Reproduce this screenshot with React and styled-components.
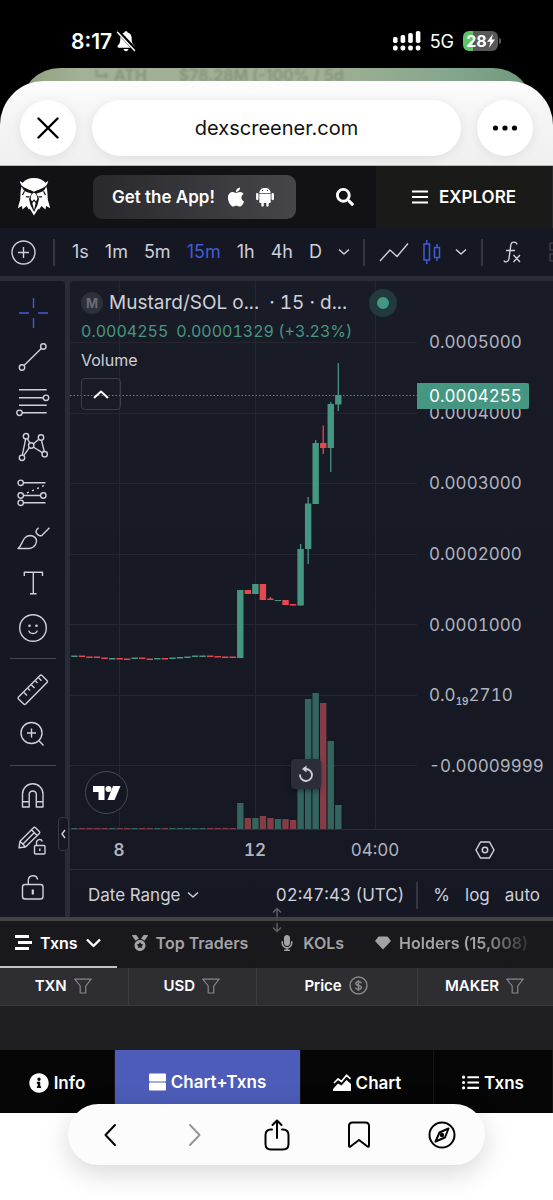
import React from "react";
import styled, { createGlobalStyle, css } from "styled-components";
import { FaApple, FaSearch, FaMedal, FaMicrophone, FaInfoCircle, FaListUl } from "react-icons/fa";
import { IoLogoAndroid } from "react-icons/io";

const color = {
  panel: "#151823",
  gap: "#2a2b38",
  line: "#2b2d39",
  text: "#ced0da",
  axis: "#b0b3be",
  green: "#459782",
  red: "#e5484f",
  volGreen: "#33645e",
  volRed: "#843d47",
  blue: "#3f5bd9",
};

const GlobalStyle = createGlobalStyle`
  *, *::before, *::after { box-sizing: border-box; }
  body {
    margin: 0;
    background: #fff;
    font-family: Inter, "Liberation Sans", sans-serif;
    color: ${color.text};
  }
  button, input {
    margin: 0;
    padding: 0;
    border: 0;
    background: none;
    font: inherit;
    color: inherit;
  }
  svg { display: block; flex: none; }
`;

const Page = styled.div`
  display: flex;
  flex-direction: column;
  background: #000;
  overflow: hidden;
`;

/* ---------- Phone status bar ---------- */

const StatusBar = styled.div`
  display: flex;
  align-items: center;
  justify-content: space-between;
  height: 68px;
  padding: 14px 55px 0 71px;
  color: #fff;
`;

const StatusGroup = styled.div`
  display: flex;
  align-items: center;
  gap: ${(p) => p.$gap}px;
`;

const Clock = styled.span`
  font-size: 21px;
  font-weight: 600;
`;

const Network = styled.span`
  font-size: 18px;
`;

const Battery = styled.span`
  position: relative;
  display: flex;
  align-items: center;
  justify-content: center;
  width: 35px;
  height: 20px;
  border-radius: 6px;
  background: linear-gradient(90deg, #5ec466 10px, #58585a 10px);
  font-size: 16px;
  font-weight: 700;

  &::after {
    content: "";
    position: absolute;
    right: -3px;
    width: 2px;
    height: 6px;
    border-radius: 0 2px 2px 0;
    background: #58585a;
  }
`;

/* ---------- Browser sheet ---------- */

const BackSheet = styled.div`
  display: flex;
  height: 40px;
  margin: 0 20px -27px;
  padding: 0 74px;
  gap: 32px;
  border-radius: 44px 44px 0 0;
  background: linear-gradient(90deg, #8f9f7c, #a3b196 12%, #9fb094 60%, #84a58d 85%, #6d9879);
  color: #84947c;
  font-size: 16px;
  font-weight: 600;
  line-height: 14px;
  white-space: pre;
  overflow: hidden;

  span { filter: blur(1px); }
`;

const BrowserBar = styled.header`
  position: relative;
  display: flex;
  align-items: center;
  gap: 16px;
  height: 85px;
  padding: 10px 20px 0;
  border-radius: 44px 44px 0 0;
  border-bottom: 1px solid #b8bab9;
  background: linear-gradient(#fdfdfd, #f5f5f6 40%, #f0f0f1);
`;

const RoundButton = styled.button`
  display: flex;
  align-items: center;
  justify-content: center;
  width: 56px;
  height: 56px;
  border-radius: 50%;
  background: #fff;
  box-shadow: 0 2px 12px rgba(0, 0, 0, 0.08);
  color: #000;
`;

const Address = styled.input`
  flex: 1;
  min-width: 0;
  height: 56px;
  border-radius: 28px;
  background: #fff;
  box-shadow: 0 2px 12px rgba(0, 0, 0, 0.08);
  color: #111;
  font-size: 20px;
  text-align: center;
`;

/* ---------- Site header ---------- */

const SiteHeader = styled.header`
  display: flex;
  align-items: stretch;
  height: 62px;
  background: #111116;
  color: #fff;
`;

const HeaderMain = styled.div`
  flex: 1;
  display: flex;
  align-items: center;
  padding: 0 22px 0 17px;
`;

const GetApp = styled.button`
  display: flex;
  align-items: center;
  gap: 5px;
  height: 44px;
  margin: 0 auto 0 42px;
  padding: 0 18px 0 19px;
  border-radius: 9px;
  background: linear-gradient(90deg, #28282d, #45454a);
  font-size: 17px;
  font-weight: 600;

  svg:first-of-type { margin-left: 5px; }
`;

const IconButton = styled.button`
  display: flex;
  align-items: center;
  justify-content: center;
  color: ${(p) => (p.$active ? color.blue : "inherit")};
`;

const Explore = styled.button`
  display: flex;
  align-items: center;
  justify-content: center;
  gap: 11px;
  width: 32%;
  background: #1a1a19;
  border-right: 1px solid #2a2a2c;
  font-size: 17px;
  font-weight: 600;
`;

/* ---------- Chart toolbar ---------- */

const Toolbar = styled.div`
  display: flex;
  align-items: center;
  justify-content: space-between;
  height: 53px;
  padding-left: 11px;
  background: ${color.panel};
  border-bottom: 5px solid ${color.gap};
  overflow: hidden;
`;

const ToolbarGroup = styled.div`
  display: flex;
  align-items: center;
  gap: ${(p) => p.$gap}px;
`;

const Interval = styled.button`
  font-size: 18px;
  line-height: 24px;
  color: ${(p) => (p.$active ? color.blue : color.text)};
`;

const Divider = styled.span`
  width: 2px;
  height: 27px;
  background: #343743;
`;

/* ---------- Chart body ---------- */

const ChartArea = styled.div`
  position: relative;
  display: flex;
  align-items: stretch;
  gap: 5px;
  background: ${color.gap};
  border-bottom: 4px solid #424247;
`;

const Tools = styled.div`
  position: relative;
  display: flex;
  flex-direction: column;
  align-items: center;
  width: 65px;
  padding: 9px 0 8px;
  border-top-right-radius: 4px;
  background: ${color.panel};
`;

const Tool = styled.button`
  display: flex;
  align-items: center;
  justify-content: center;
  height: 45px;
  color: ${(p) => (p.$active ? color.blue : color.text)};
`;

const ToolRule = styled.hr`
  width: 46px;
  height: 1px;
  margin: 8px 0;
  border: 0;
  background: #454854;
`;

const Collapse = styled.button`
  position: absolute;
  right: -4px;
  bottom: 66px;
  display: flex;
  align-items: center;
  justify-content: center;
  width: 11px;
  height: 34px;
  border: 1px solid #353846;
  border-radius: 4px;
  background: ${color.panel};
`;

const ChartPanel = styled.div`
  flex: 1;
  min-width: 0;
  display: flex;
  flex-direction: column;
  border-top-left-radius: 4px;
  background: linear-gradient(#191b26, ${color.panel});
  font-variant-numeric: tabular-nums;
`;

const PlotRow = styled.div`
  display: flex;
  height: 549px;
  border-bottom: 1px solid ${color.line};
`;

const Plot = styled.div`
  position: relative;
  flex: 1;
  min-width: 0;
`;

const PlotSvg = styled.svg`
  width: 100%;
  height: 100%;
`;

const Legend = styled.div`
  position: absolute;
  top: 8px;
  left: 11px;
  display: flex;
  flex-direction: column;
  align-items: flex-start;
`;

const Symbol = styled.div`
  display: flex;
  align-items: center;
  height: 27px;
  gap: 6px;
  font-size: 19px;
  white-space: pre;
`;

const TokenBadge = styled.span`
  display: flex;
  align-items: center;
  justify-content: center;
  width: 22px;
  height: 22px;
  border-radius: 50%;
  background: #2d2f3a;
  color: #686b76;
  font-size: 13px;
  font-weight: 700;
`;

const LiveDot = styled.span`
  width: 28px;
  height: 28px;
  margin-left: 16px;
  border: 8px solid #203a3d;
  border-radius: 50%;
  background: ${color.green};
`;

const Quote = styled.div`
  display: flex;
  gap: 8px;
  height: 30px;
  color: ${color.green};
  font-size: 16px;
  line-height: 30px;
  white-space: nowrap;
`;

const Study = styled.div`
  height: 28px;
  font-size: 16px;
  line-height: 28px;
`;

const LegendToggle = styled.button`
  display: flex;
  align-items: center;
  justify-content: center;
  width: 40px;
  height: 32px;
  margin-top: 4px;
  border: 1px solid #3a3d49;
  border-radius: 4px;
  color: #fff;
`;

const BrandMark = styled.a`
  position: absolute;
  left: 15px;
  bottom: 15px;
  display: flex;
  align-items: center;
  justify-content: center;
  width: 43px;
  height: 43px;
  border: 1px solid #484b55;
  border-radius: 50%;
  background: ${color.panel};
  color: #fff;
`;

const ResetView = styled.button`
  position: absolute;
  right: 96px;
  bottom: 40px;
  display: flex;
  align-items: center;
  justify-content: center;
  width: 30px;
  height: 30px;
  border-radius: 4px;
  background: #2b2d39;
  box-shadow: 0 2px 5px rgba(0, 0, 0, 0.4);
`;

const PriceAxis = styled.div`
  position: relative;
  display: flex;
  flex-direction: column;
  justify-content: space-between;
  width: 136px;
  padding: 51px 0 53px 12px;
  color: ${color.axis};
  font-size: 17px;
  line-height: 20px;

  sub {
    font-size: 10px;
    font-weight: 600;
    line-height: 0;
  }
`;

const LastPrice = styled.div`
  position: absolute;
  top: 102px;
  left: 0;
  width: 112px;
  padding-left: 12px;
  border-radius: 0 2px 2px 0;
  background: ${color.green};
  color: #fff;
  line-height: 26px;
`;

const TimeRow = styled.div`
  display: flex;
  align-items: center;
  height: 40px;
  border-bottom: 1px solid ${color.line};
`;

const TimeAxis = styled.div`
  flex: 1;
  display: grid;
  grid-template-columns: 98fr 174fr 66fr 9fr;
  text-align: center;
  color: ${color.axis};
  font-size: 17px;

  b { font-weight: 600; }
`;

const AxisCorner = styled.div`
  display: flex;
  justify-content: center;
  width: 136px;
`;

const RangeRow = styled.div`
  display: flex;
  align-items: center;
  height: 47px;
  padding: 3px 13px 0 18px;
  font-size: 17px;
`;

const RangeButton = styled.button`
  display: flex;
  align-items: center;
  gap: 7px;
  margin-right: auto;
`;

const ScaleOptions = styled.div`
  display: flex;
  align-items: center;
  gap: 15px;
  margin-left: 12px;
`;

const ResizeHandle = styled.div`
  position: absolute;
  left: 50%;
  bottom: -16px;
  margin-left: -6px;
  color: #62636b;
`;

/* ---------- Transactions ---------- */

const Tabs = styled.nav`
  display: flex;
  height: 47px;
  background: linear-gradient(#1a191e, #17171c);
  overflow: hidden;
`;

const Tab = styled.button`
  display: flex;
  align-items: center;
  gap: 8px;
  padding: 0 16px 4px 15px;
  color: #a3a3a6;
  font-size: 16px;
  font-weight: 600;
  white-space: nowrap;
  ${(p) =>
    p.$active &&
    css`
      color: #fff;
      box-shadow: inset 0 -2px #c0c0c3;
    `}
  ${(p) =>
    p.$fade &&
    css`
      mask-image: linear-gradient(90deg, #000 65%, transparent 97%);
    `}
`;

const TxnTable = styled.table`
  width: 100%;
  table-layout: fixed;
  border-collapse: collapse;
  background: #1f1e23;
  color: #fff;
`;

const HeadCell = styled.th`
  width: ${(p) => p.$width};
  height: 37px;
  padding: 0 2px 1px 0;
  background: #2e2d32;
  border-right: 1px solid #3b3b40;
  border-bottom: 1px solid #3b3b40;
  font-size: 15px;
  font-weight: 600;

  &:last-child { border-right: 0; }
`;

const HeadLabel = styled.span`
  display: flex;
  align-items: center;
  justify-content: center;
  gap: 7px;

  svg { color: #88888b; }
`;

const EmptyCell = styled.td`
  height: 45px;
  padding: 0;
`;

const ViewNav = styled.nav`
  display: grid;
  grid-template-columns: 115fr 186fr 133fr 119fr;
  height: 63px;
  background: #050505;
`;

const View = styled.button`
  display: flex;
  align-items: center;
  justify-content: center;
  gap: 5px;
  padding-top: ${(p) => (p.$active ? 0 : 2)}px;
  background: ${(p) => (p.$active ? "#4c5cb8" : "none")};
  border-right: 1px solid #151515;
  color: #fff;
  font-size: 17px;
  font-weight: 600;
  white-space: nowrap;
`;

/* ---------- Browser controls ---------- */

const BrowserFooter = styled.footer`
  padding: 0 68px 35px;
  background: #fff;
`;

const Controls = styled.nav`
  position: relative;
  display: flex;
  align-items: center;
  justify-content: space-between;
  height: 61px;
  margin-top: -9px;
  padding: 0 28px;
  border-radius: 31px;
  background: #fcfcfc;
  box-shadow: 0 8px 28px rgba(0, 0, 0, 0.16);
  color: #000;
`;

/* ---------- Icons ---------- */

const Draw = ({ w = 36, h = w, sw = 1.4, children, ...rest }) => (
  <svg
    width={w}
    height={h}
    viewBox={`0 0 ${w} ${h}`}
    fill="none"
    stroke="currentColor"
    strokeWidth={sw}
    strokeLinejoin="round"
    aria-hidden="true"
    {...rest}
  >
    {children}
  </svg>
);

const ChevronDown = ({ w = 12, h = 8, sw = 1.5 }) => (
  <Draw w={w} h={h} sw={sw}>
    <path d={`M1 1.5 L${w / 2} ${h - 2} L${w - 1} 1.5`} />
  </Draw>
);

const BellOff = () => (
  <Draw w={20} h={22} sw={0}>
    <path
      fill="currentColor"
      d="M10 1.2c.9 0 1.5.5 1.6 1.3 2.7.7 4.1 2.8 4.1 5.8 0 4.5.8 5.5 2.3 7 .9.9.6 2.4-.8 2.4H2.8c-1.4 0-1.7-1.5-.8-2.4 1.500-1.500 2.300-2.500 2.300-7 0-3 1.400-5.100 4.100-5.800.1-.8.7-1.300 1.600-1.300zM7.500 19h5c-.2 1.400-1.200 2.200-2.500 2.200S7.700 20.400 7.500 19z"
    />
    <path d="M2.5 2 L18.8 19.5" stroke="#000" strokeWidth="4" />
    <path d="M1.5 2.2 L18.5 20.5" stroke="currentColor" strokeWidth="1.5" strokeLinecap="round" />
  </Draw>
);

const Signal = () => (
  <Draw w={28} h={20} sw={0} fill="currentColor">
    {[0, 1, 2, 3].map((i) => (
      <g key={i}>
        <rect x={i * 7.6} y={6 - i * 2} width="4.6" height={6 + i * 2} rx="1.8" />
        <rect x={i * 7.6} y="14.5" width="4.6" height="5" rx="1.8" />
      </g>
    ))}
  </Draw>
);

const Bolt = () => (
  <Draw w={8} h={14} sw={0}>
    <path fill="currentColor" d="M6 0 L0 7.8 H3.5 L2 14 L8 5.6 H4.6 Z" />
  </Draw>
);

const Owl = () => (
  <Draw w={34} h={40} sw={0}>
    <path
      fill="#fff"
      d="M17 1c5 0 9 1.8 11.3 4.7l2.9-1.8c-.4 2.1-1.2 3.7-2.2 5 .9 1.7 1.3 4 1.4 6.5l.4 7.2 2.4 8.6-4.1-2.1-.7 3.5-3.9-3.5-2.600 3.600-.5-1.100L17 38.500l-4.400-6.900-.5 1.100-2.600-3.600-3.900 3.500-.7-3.500-4.100 2.100 2.400-8.600.4-7.200c.1-2.500.5-4.800 1.400-6.500-1-1.300-1.800-2.900-2.200-5l2.900 1.800C8 2.800 12 1 17 1z"
    />
    <path
      fill="#111116"
      d="M4.6 8.2c3.3 3.7 8.2 4.1 12.4 6.6 4.2-2.5 9.1-2.9 12.4-6.6-.6 4.3-3.4 6.7-7.4 7.5l-2.5.7L22 22l-1.5 6-3.5 7-3.5-7-1.5-6 2.5-5.6-2.5-.7c-4-.8-6.8-3.2-7.4-7.5z"
    />
    <path fill="#fff" d="M17 15.8c2.2.4 3.3 3 3.3 6.3L19 24.5l-2-2.3-2 2.3-1.3-2.4c0-3.3 1.100-5.900 3.300-6.300zM15.300 26l1.700-1.900 1.700 1.900-1.700 7z" />
    <path fill="#fff" d="M7.2 15.7l5.3 1.5c-.4 1.8-4.3 1.8-5.3-1.5zM26.8 15.7l-5.3 1.5c.4 1.8 4.3 1.8 5.3-1.5z" />
    <path d="M7.5 14.2l-2 3.8M26.5 14.2l2 3.8M9 19.5c1.5.8 2.5.5 3.5 0M25 19.5c-1.5.8-2.5.5-3.5 0" stroke="#111116" strokeWidth="1.2" />
  </Draw>
);

const Menu = () => (
  <Draw w={16} h={14} sw={2.2}>
    <path d="M0 1.5H16M0 7H16M0 12.5H16" />
  </Draw>
);

const PlusCircle = () => (
  <Draw w={25}>
    <circle cx="12.5" cy="12.5" r="11.5" />
    <path d="M12.5 7V18M7 12.5H18" />
  </Draw>
);

const LineStyle = () => (
  <Draw w={30} h={20}>
    <path d="M1 19 L11 8 L18 14.5 L29 1.5" />
  </Draw>
);

const Candles = () => (
  <Draw w={18} h={26} sw={1.5}>
    <path d="M1 5H6.5V21H1ZM3.7 1V5M3.7 21V25M11.5 8.5H16.5V18.5H11.5ZM14 5V8.5M14 18.5V22" />
  </Draw>
);

const Fx = () => (
  <Draw w={18} h={22}>
    <path d="M14 3.5C13.5 .5 8.5 0 7.8 4L6 17.5C5.5 21.5 1.5 21.7 1 19.5M3 9.500H12M10.500 14L17 21M17 14L10.500 21" />
  </Draw>
);

const GridFade = () => (
  <Draw w={12} h={20} sw={1.2} opacity="0.25">
    <path d="M12 1H9V8H12M12 12H9V19H12" />
  </Draw>
);

const toolIcons = {
  Crosshair: <path d="M4 18H14M23 18H33M18.5 3V13M18.5 23V33" />,
  "Trend line": (
    <>
      <circle cx="7" cy="27.5" r="2.7" />
      <circle cx="28.3" cy="6.5" r="2.7" />
      <path d="M9 25.5L26.3 8.5" />
    </>
  ),
  "Fib retracement": (
    <>
      <path d="M4 4.8H31.7M4 12.8H28.3M4 20.2H31.7M7 27.8H31.7" />
      <circle cx="31" cy="12.8" r="2.7" />
      <circle cx="4.5" cy="27.8" r="2.7" />
    </>
  ),
  Patterns: (
    <>
      <path d="M7.3 25.2L10.7 8.8M12.4 8.5L14.9 13.2M18.3 14L23.8 9.3M26.4 10.2L29.3 21.5M18.2 17L27.4 22.7M14.4 17.7L8.7 25.6" />
      <circle cx="7" cy="27.8" r="2.7" />
      <circle cx="11" cy="6.2" r="2.7" />
      <circle cx="16.2" cy="15.5" r="2.7" />
      <circle cx="26" cy="7.5" r="2.7" />
      <circle cx="29.7" cy="24.2" r="2.7" />
    </>
  ),
  Projection: (
    <>
      <path d="M8.5 7.8H30.5M8.5 20.5H25.6M8.5 27.8H30.5" />
      <path d="M12 18L29 10.5" strokeDasharray="2 3.5" />
      <circle cx="5.7" cy="7.8" r="2.7" />
      <circle cx="5.7" cy="20.5" r="2.7" />
      <circle cx="28.3" cy="20.5" r="2.7" />
      <circle cx="5.7" cy="27.8" r="2.7" />
    </>
  ),
  Brush: (
    <>
      <path d="M3 28.5C8 25 7 16 15 15.5C19 15.5 22 18.5 21.5 21.5C21 26 17 28.5 13.5 28.5Z" />
      <path d="M34.5 7.8L27 15.3C24.5 17 20 13.5 21.3 10.5C21.8 9 22.6 8.5 23.7 7.8" />
    </>
  ),
  Text: <path d="M9.3 11V7.2H27.5V11M18.3 7.2V28.8M15 28.8H21.6" />,
  Emoji: (
    <>
      <circle cx="18" cy="18" r="13.3" />
      <circle cx="14.5" cy="15.8" r="1.3" fill="currentColor" stroke="none" />
      <circle cx="21.5" cy="15.8" r="1.3" fill="currentColor" stroke="none" />
      <path d="M13.8 20.5C14.5 24.5 21.5 24.5 22.2 20.5" />
    </>
  ),
  Measure: (
    <>
      <path d="M3.5 25L25 3.5Q26 2.5 27 3.5L32 8.5Q33 9.5 32 10.5L10.7 32Q9.7 33 8.7 32L3.5 27Q2.5 26 3.5 25Z" />
      <path d="M9 20.5L12 23.5M13 16.5L15 18.5M16.5 13L19.5 16M20.5 9L22.5 11M23.5 5.8L26.5 8.8" />
    </>
  ),
  Zoom: (
    <>
      <circle cx="16.5" cy="16" r="10.5" />
      <path d="M16.5 11.5V20.5M12 16H21M24 23.8L28.5 28.5" />
    </>
  ),
  Magnet: (
    <path d="M7.5 28V15A10.2 10.2 0 0 1 28 15V28H21.3V15A3.6 3.6 0 0 0 14.2 15V28ZM7.5 22.8H14.2M21.3 22.8H28" />
  ),
  "Keep drawing": (
    <>
      <path d="M4 23.8L5 17.2L18.5 3.8Q19.5 2.8 20.5 3.8L24.3 7.5Q25.3 8.5 24.3 9.5L10.5 23ZM5 17.2L10.5 23M16.5 5.8L22 11.5M8 20L19.2 8.7" />
      <rect x="19.5" y="21.5" width="10.5" height="8.5" rx="1" />
      <path d="M21.5 21.5V18.5A3 3 0 0 1 27.3 17.5M24.8 24.5V27" />
    </>
  ),
  Lock: (
    <>
      <rect x="7.5" y="15.5" width="20.5" height="14.5" rx="2.5" />
      <path d="M13.3 15.5V11A4.7 4.7 0 0 1 22.6 10.5" />
      <path d="M17.8 20.5V25.5" strokeWidth="2.2" />
    </>
  ),
};

const toolGroups = [
  ["Crosshair", "Trend line", "Fib retracement", "Patterns", "Projection", "Brush", "Text", "Emoji"],
  ["Measure", "Zoom"],
  ["Magnet", "Keep drawing", "Lock"],
];

const TradingMark = () => (
  <Draw w={28} h={16} sw={0} fill="currentColor">
    <path d="M0 1H11.5V15H5.5V7H0Z" />
    <circle cx="15.5" cy="4" r="3" />
    <path d="M20 1H27.5L21.5 15H14.5Z" />
  </Draw>
);

const Reset = () => (
  <Draw w={16} h={18} sw={1.8}>
    <path d="M2 9.5A6 6 0 1 0 8 4H6" />
    <path d="M8.5 .5L4 4L8.5 7.5Z" fill="currentColor" stroke="none" />
  </Draw>
);

const Hexagon = () => (
  <Draw w={20} h={18} sw={1.5}>
    <path d="M5.5 1H14.5L19 9L14.5 17H5.5L1 9Z" />
    <circle cx="10" cy="9" r="2.7" />
  </Draw>
);

const ResizeArrows = () => (
  <Draw w={12} h={26} sw={1.4}>
    <path d="M6 10V1.5M2 5.5L6 1.5L10 5.5M6 16V24.5M2 20.5L6 24.5L10 20.5" />
  </Draw>
);

const TxnLines = () => (
  <Draw w={17} h={15} sw={3}>
    <path d="M0 1.5H14M3 7.5H17M0 13.5H14" />
  </Draw>
);

const Gem = () => (
  <Draw w={16} h={14} sw={0}>
    <path fill="currentColor" d="M3.5 .5H12.5L16 5L8 13.5L0 5Z" />
  </Draw>
);

const Funnel = () => (
  <Draw w={18} h={16} sw={1.2}>
    <path d="M.8 1.2H17.2L11.8 8V15H6.2V8Z" />
  </Draw>
);

const DollarCircle = () => (
  <Draw w={19} sw={1.5}>
    <circle cx="9.5" cy="9.5" r="8.5" />
    <path d="M12.5 7.2C12 5.5 7 5.2 6.8 7.5C6.7 10 12.5 8.8 12.4 11.5C12.3 14 7 13.6 6.5 11.6M9.5 4V15" />
  </Draw>
);

const SplitRows = () => (
  <Draw w={17} h={18} sw={0} fill="currentColor">
    <rect y="0.5" width="17" height="8" rx="1" />
    <rect y="9.5" width="17" height="8" rx="1" />
  </Draw>
);

const AreaChart = () => (
  <Draw w={18} h={17} sw={0}>
    <path fill="currentColor" d="M0 17V15L5 9.5L8.5 11.5L13.5 6L18 10V17Z" />
    <path d="M1 9L5 5L8.5 7.5L13.5 1.2L17.5 5" stroke="currentColor" strokeWidth="1.7" />
  </Draw>
);

/* ---------- Data ---------- */

const GRID_Y = [61.5, 132.5, 202.5, 273.5, 343.5, 414.5, 484.5];
const GRID_X = [49.5, 185.5, 305.5];
const STEP = 7.54;

/* Flat stretch: direction and price level */
const quiet = [
  ["g", 375], ["r", 375], ["r", 376], ["r", 376], ["r", 377], ["g", 377.5], ["r", 377.5], ["r", 378],
  ["g", 377], ["r", 377], ["r", 378], ["g", 377.5], ["r", 377.5], ["g", 377], ["g", 376.5], ["g", 376],
  ["g", 375], ["g", 375], ["r", 375], ["r", 375.5], ["r", 376], ["r", 376],
].map(([dir, y]) => [dir, y - 0.5, y + 1, y, y, 2]);

/* Direction, body top, body bottom, wick top, wick bottom, volume height */
const rally = [
  ["g", 309, 377, 309, 377, 27],
  ["r", 309, 313, 309, 313, 12],
  ["g", 303, 313, 303, 313, 12],
  ["r", 303, 319, 303, 319, 14],
  ["r", 317.5, 319, 316, 319, 12],
  ["g", 319, 320, 319, 320, 11],
  ["r", 319, 324, 319, 324, 11],
  ["r", 323, 324.5, 323, 324.5, 10],
  ["g", 268, 324.5, 263, 324.5, 54],
  ["g", 222.5, 268, 216, 283, 131],
  ["g", 162, 223, 159, 223, 137],
  ["r", 162, 167, 144.5, 173, 127],
  ["g", 123, 167, 121, 191, 89],
  ["g", 114, 123.5, 82, 130, 25],
];

const candles = [...quiet, ...rally];

const prices = [
  "0.0005000",
  "0.0004000",
  "0.0003000",
  "0.0002000",
  "0.0001000",
  <>0.0<sub>19</sub>2710</>,
  "-0.00009999",
];

const PriceChart = () => (
  <PlotSvg viewBox="0 0 347 549" preserveAspectRatio="xMaxYMin slice" role="img" aria-label="Price and volume chart">
    <g stroke="#242732" strokeWidth="1">
      {GRID_Y.map((y) => (
        <path key={y} d={`M0 ${y}H347`} />
      ))}
      {GRID_X.map((x) => (
        <path key={x} d={`M${x} 0V549`} />
      ))}
    </g>
    {candles.map(([dir, top, bottom, high, low, volume], i) => {
      const x = 4.4 + i * STEP;
      const up = dir === "g";
      return (
        <g key={i}>
          <rect x={x - 3.2} y={549 - volume} width="6.4" height={volume} fill={up ? color.volGreen : color.volRed} />
          <rect x={x - 3.2} y={top} width="6.4" height={bottom - top} fill={up ? color.green : color.red} />
          <path d={`M${x} ${high}V${low}`} stroke={up ? color.green : color.red} strokeWidth="1.3" />
        </g>
      );
    })}
    <path d="M0 114.5H347" stroke={color.green} strokeWidth="1" strokeDasharray="1.5 2" />
  </PlotSvg>
);

const intervals = ["1s", "1m", "5m", "15m", "1h", "4h", "D"];

export default function App() {
  return (
    <Page>
      <GlobalStyle />

      <StatusBar>
        <StatusGroup $gap={4}>
          <Clock>8:17</Clock>
          <BellOff />
        </StatusGroup>
        <StatusGroup $gap={9}>
          <Signal />
          <Network>5G</Network>
          <Battery>
            28
            <Bolt />
          </Battery>
        </StatusGroup>
      </StatusBar>

      <BackSheet>
        <span>↳ ATH</span>
        <span>$78.28M (-100% / 5d</span>
      </BackSheet>

      <BrowserBar>
        <RoundButton aria-label="Close">
          <Draw w={22} sw={2.4} strokeLinecap="round">
            <path d="M1.5 1.5L20.5 20.5M20.5 1.5L1.5 20.5" />
          </Draw>
        </RoundButton>
        <Address aria-label="Address" defaultValue="dexscreener.com" />
        <RoundButton aria-label="More">
          <Draw w={26} h={6} sw={0} fill="currentColor">
            <circle cx="3.5" cy="3" r="2.6" />
            <circle cx="13" cy="3" r="2.6" />
            <circle cx="22.5" cy="3" r="2.6" />
          </Draw>
        </RoundButton>
      </BrowserBar>

      <SiteHeader>
        <HeaderMain>
          <Owl />
          <GetApp>
            Get the App!
            <FaApple size={22} />
            <IoLogoAndroid size={26} />
          </GetApp>
          <IconButton aria-label="Search">
            <FaSearch size={18} />
          </IconButton>
        </HeaderMain>
        <Explore>
          <Menu />
          EXPLORE
        </Explore>
      </SiteHeader>

      <Toolbar>
        <ToolbarGroup $gap={17}>
          <IconButton aria-label="Add symbol">
            <PlusCircle />
          </IconButton>
          <Divider />
          <ToolbarGroup $gap={16}>
            {intervals.map((name) => (
              <Interval key={name} $active={name === "15m"}>
                {name}
              </Interval>
            ))}
            <IconButton aria-label="More intervals">
              <ChevronDown />
            </IconButton>
          </ToolbarGroup>
        </ToolbarGroup>
        <ToolbarGroup $gap={14}>
          <Divider />
          <IconButton aria-label="Line style">
            <LineStyle />
          </IconButton>
          <IconButton $active aria-label="Candles">
            <Candles />
          </IconButton>
          <IconButton aria-label="More chart types">
            <ChevronDown />
          </IconButton>
        </ToolbarGroup>
        <ToolbarGroup $gap={20}>
          <Divider />
          <IconButton aria-label="Indicators">
            <Fx />
          </IconButton>
          <GridFade />
        </ToolbarGroup>
      </Toolbar>

      <ChartArea>
        <Tools>
          {toolGroups.map((group, i) => (
            <React.Fragment key={i}>
              {i > 0 && <ToolRule />}
              {group.map((name) => (
                <Tool key={name} aria-label={name} $active={name === "Crosshair"}>
                  <Draw>{toolIcons[name]}</Draw>
                </Tool>
              ))}
            </React.Fragment>
          ))}
          <Collapse aria-label="Hide drawing toolbar">
            <Draw w={5} h={10}>
              <path d="M4 1L1 5L4 9" />
            </Draw>
          </Collapse>
        </Tools>

        <ChartPanel>
          <PlotRow>
            <Plot>
              <PriceChart />
              <Legend>
                <Symbol>
                  <TokenBadge>M</TokenBadge>
                  {"Mustard/SOL o...  · 15 · d..."}
                  <LiveDot />
                </Symbol>
                <Quote>
                  <span>0.0004255</span>
                  <span>0.00001329 (+3.23%)</span>
                </Quote>
                <Study>Volume</Study>
                <LegendToggle aria-label="Collapse legend">
                  <Draw w={16} h={9} sw={2}>
                    <path d="M1 8L8 1.5L15 8" />
                  </Draw>
                </LegendToggle>
              </Legend>
              <BrandMark href="#tradingview" aria-label="TradingView">
                <TradingMark />
              </BrandMark>
              <ResetView aria-label="Reset chart view">
                <Reset />
              </ResetView>
            </Plot>
            <PriceAxis>
              {prices.map((price, i) => (
                <span key={i}>{price}</span>
              ))}
              <LastPrice>0.0004255</LastPrice>
            </PriceAxis>
          </PlotRow>
          <TimeRow>
            <TimeAxis>
              <b>8</b>
              <b>12</b>
              <span>04:00</span>
            </TimeAxis>
            <AxisCorner>
              <IconButton aria-label="Chart settings">
                <Hexagon />
              </IconButton>
            </AxisCorner>
          </TimeRow>
          <RangeRow>
            <RangeButton>
              Date Range
              <ChevronDown />
            </RangeButton>
            <span>02:47:43 (UTC)</span>
            <ScaleOptions>
              <Divider />
              <button>%</button>
              <button>log</button>
              <button>auto</button>
            </ScaleOptions>
          </RangeRow>
        </ChartPanel>
        <ResizeHandle>
          <ResizeArrows />
        </ResizeHandle>
      </ChartArea>

      <Tabs>
        <Tab $active>
          <TxnLines />
          Txns
          <ChevronDown w={15} h={10} sw={2.4} />
        </Tab>
        <Tab>
          <FaMedal size={16} />
          Top Traders
        </Tab>
        <Tab>
          <FaMicrophone size={16} />
          KOLs
        </Tab>
        <Tab $fade>
          <Gem />
          Holders (15,008)
        </Tab>
      </Tabs>

      <TxnTable>
        <thead>
          <tr>
            <HeadCell $width="23.3%">
              <HeadLabel>TXN <Funnel /></HeadLabel>
            </HeadCell>
            <HeadCell $width="23.1%">
              <HeadLabel>USD <Funnel /></HeadLabel>
            </HeadCell>
            <HeadCell $width="29.1%">
              <HeadLabel>Price <DollarCircle /></HeadLabel>
            </HeadCell>
            <HeadCell $width="24.5%">
              <HeadLabel>MAKER <Funnel /></HeadLabel>
            </HeadCell>
          </tr>
        </thead>
        <tbody>
          <tr>
            <EmptyCell colSpan={4} />
          </tr>
        </tbody>
      </TxnTable>

      <ViewNav>
        <View>
          <FaInfoCircle size={20} />
          Info
        </View>
        <View $active>
          <SplitRows />
          Chart+Txns
        </View>
        <View>
          <AreaChart />
          Chart
        </View>
        <View>
          <FaListUl size={17} />
          Txns
        </View>
      </ViewNav>

      <BrowserFooter>
        <Controls>
          <IconButton aria-label="Back">
            <Draw w={30} sw={2} strokeLinecap="round">
              <path d="M19 5L9.5 15L19 25" />
            </Draw>
          </IconButton>
          <IconButton aria-label="Forward">
            <Draw w={30} sw={2} strokeLinecap="round" opacity="0.4">
              <path d="M11 5L20.5 15L11 25" />
            </Draw>
          </IconButton>
          <IconButton aria-label="Share">
            <Draw w={30} h={34} sw={2} strokeLinecap="round">
              <path d="M10 11.5H9Q3.500 11.500 3.500 17V26Q3.500 31.500 9 31.500H21Q26.500 31.500 26.500 26V17Q26.500 11.500 21 11.500H20M15 20V2.500M10.500 7L15 2.500L19.500 7" />
            </Draw>
          </IconButton>
          <IconButton aria-label="Bookmarks">
            <Draw w={30} sw={2}>
              <path d="M5 25.5V6Q5 2.5 8.5 2.5H21.5Q25 2.5 25 6V25.5Q25 27.5 23.5 26.5L15 20L6.5 26.5Q5 27.5 5 25.5Z" />
            </Draw>
          </IconButton>
          <IconButton aria-label="Open in browser">
            <Draw w={30} sw={2}>
              <circle cx="15" cy="15" r="12.5" />
              <path d="M21.5 8.5L18 17.5L8.5 21.5L12.5 12.5Z" />
              <circle cx="15" cy="15" r="1.2" fill="currentColor" />
            </Draw>
          </IconButton>
        </Controls>
      </BrowserFooter>
    </Page>
  );
}
